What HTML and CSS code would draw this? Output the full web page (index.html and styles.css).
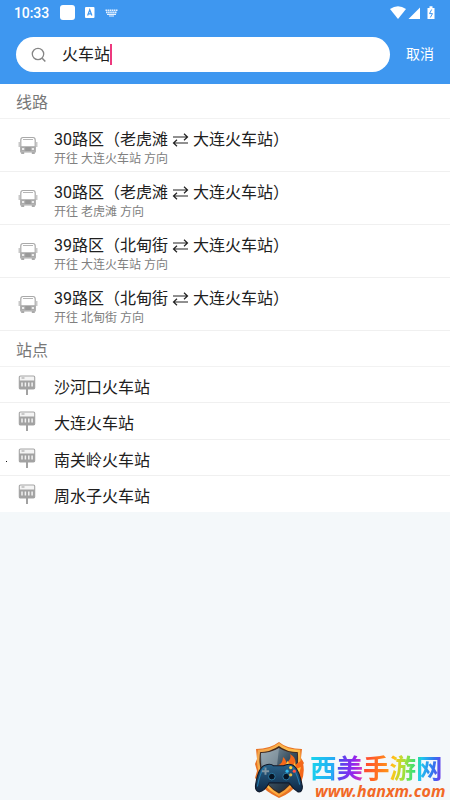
FILE: index.html
```html
<!DOCTYPE html>
<html lang="zh-CN">
<head>
<meta charset="utf-8">
<title>火车站</title>
<link rel="stylesheet" href="styles.css">
</head>
<body>
<svg class="defs" aria-hidden="true">
  <symbol id="bus" viewBox="0 0 20 20">
    <path d="M1.2 6v5M18.8 6v5" stroke="#bbb" stroke-width="1.2"/>
    <path d="M2.8 16V4Q2.8 1.5 5 1.5H15Q17.2 1.5 17.2 4V16Z" fill="#fff" stroke="#a9a9a9" stroke-width="1.2"/>
    <path d="M5 3.5h10" stroke="#b5b5b5"/>
    <path d="M2.5 10.2h15v5.5h-15z" fill="#aaa"/>
    <path d="M4 13h2.2M13.8 13H16" stroke="#fff" stroke-width="1.5"/>
    <path d="M7.3 12h5.4M7.3 14h5.4" stroke="#888"/>
    <path d="M3.2 16h3v2h-3zM13.8 16h3v2h-3z" fill="#aaa"/>
  </symbol>
  <symbol id="stop" viewBox="0 0 18 20">
    <rect x="1.3" y="1" width="15.4" height="13" rx="1.2" fill="#f4f4f4" stroke="#a5a5a5" stroke-width="1.1"/>
    <path d="M3.5 3h3" stroke="#aaa" stroke-width="1.2"/>
    <path d="M1.3 5.5h15.4V14H1.3z" fill="#a2a2a2"/>
    <path d="M4 7.4v4.2M7.4 7.4v4.2M10.8 7.4v4.2M14.1 7.4v4.2" stroke="#f2f2f2" stroke-width="1.5"/>
    <path d="M9 14v6" stroke="#a2a2a2" stroke-width="2"/>
  </symbol>
  <symbol id="swap" viewBox="0 0 17 16">
    <path d="M1 5H15.3M12 1.8 15.5 5 12 8.2M16 11H1.7M5 7.8 1.5 11 5 14.2" fill="none" stroke="#222" stroke-width="1.2"/>
  </symbol>
</svg>
<header class="top">
  <div class="status">
    <span class="clock">10:33</span>
    <i class="app"></i>
    <svg class="kbd-a" viewBox="0 0 10 11"><rect width="9.5" height="11" rx="1" fill="#fff"/><path d="M2.6 8.5 4.75 2.7 6.9 8.5M3.4 6.8h2.8" fill="none" stroke="#3e97f0" stroke-width="1.2"/></svg>
    <svg class="kbd" viewBox="0 0 13 8"><path d="M.5 1.2h12M1 3.4h11" stroke="#e6f2ff" stroke-width="1.6" stroke-dasharray="1.6 .5"/><path d="M2 5.3h9M4 7h5" stroke="#e6f2ff" stroke-width="1.2"/></svg>
    <svg class="signals" viewBox="0 0 47 14"><path d="M0 3Q8-2.5 16 3L8 13Z" fill="#fff"/><path d="M30 1.5V13H18.5Z" fill="#fff"/><path d="M37.5 2h2V.3h3V2h2v11h-7z" fill="#fff"/><path d="M41.7 3.5 39.5 7.6h3L40.3 11.5" fill="none" stroke="#3e97f0" stroke-width="1"/></svg>
  </div>
  <div class="search-row">
    <div class="search">
      <svg class="lens" viewBox="0 0 16 16"><circle cx="7" cy="7" r="5.7" fill="none" stroke="#858585" stroke-width="1.3"/><path d="M11.2 11.2 14.3 14.6" stroke="#858585" stroke-width="1.5"/></svg>
      <span class="query">火车站</span><i class="caret"></i>
    </div>
    <span class="cancel">取消</span>
  </div>
</header>
<main>
  <h2 class="heading">线路</h2>
  <ul class="list routes">
    <li><svg class="bus"><use href="#bus"/></svg><div><p class="name">30路区（老虎滩<svg class="swap"><use href="#swap"/></svg>大连火车站）</p><p class="dir">开往 大连火车站 方向</p></div></li>
    <li><svg class="bus"><use href="#bus"/></svg><div><p class="name">30路区（老虎滩<svg class="swap"><use href="#swap"/></svg>大连火车站）</p><p class="dir">开往 老虎滩 方向</p></div></li>
    <li><svg class="bus"><use href="#bus"/></svg><div><p class="name">39路区（北甸街<svg class="swap"><use href="#swap"/></svg>大连火车站）</p><p class="dir">开往 大连火车站 方向</p></div></li>
    <li><svg class="bus"><use href="#bus"/></svg><div><p class="name">39路区（北甸街<svg class="swap"><use href="#swap"/></svg>大连火车站）</p><p class="dir">开往 北甸街 方向</p></div></li>
  </ul>
  <h2 class="heading second">站点</h2>
  <ul class="list stops">
    <li><svg class="stop"><use href="#stop"/></svg><p class="name">沙河口火车站</p></li>
    <li><svg class="stop"><use href="#stop"/></svg><p class="name">大连火车站</p></li>
    <li><svg class="stop"><use href="#stop"/></svg><p class="name">南关岭火车站</p></li>
    <li><svg class="stop"><use href="#stop"/></svg><p class="name">周水子火车站</p></li>
  </ul>
</main>
<i class="speck"></i>
<div class="mark">
  <svg class="shield" viewBox="0 0 60 60">
    <defs>
      <linearGradient id="fire" x1="0" y1="0" x2="1" y2="1"><stop offset="0" stop-color="#f0a04c"/><stop offset=".5" stop-color="#ffc04c"/><stop offset="1" stop-color="#f58a2c"/></linearGradient>
      <linearGradient id="steel" x1="0" y1="0" x2="1" y2="1"><stop offset="0" stop-color="#94a8b5"/><stop offset=".5" stop-color="#3a5060"/><stop offset="1" stop-color="#101c2c"/></linearGradient>
      <linearGradient id="pad" x1="0" y1="0" x2="0" y2="1"><stop offset="0" stop-color="#2a638a"/><stop offset="1" stop-color="#0e2744"/></linearGradient>
    </defs>
    <path d="M32 1Q40 8 55 8L54 17 57 22 54 27 56 35 51 42Q45 52 32 57Q17 50 12 41L8 37 10 30 8 23 10 18 9 8Q23 8 32 1Z" fill="#e87325"/>
    <path d="M32 3.5Q40 10 52 10Q53 21 51 31Q47 46 32 54Q17 46 13 31Q10 21 12 10Q23 10 32 3.5Z" fill="#40291f" stroke="url(#fire)" stroke-width="2.5"/>
    <path d="M32 7Q40 12 50 12Q51 24 48 33Q44 45 32 51Q20 45 16 33Q13 24 14 12Q24 12 32 7Z" fill="url(#steel)"/>
    <path d="M32 7 30 25 16 28 14 12Q24 12 32 7Z" fill="#a2b1b8" opacity=".55"/>
    <path d="M28 25Q36 24 36 16Q40 19 39 22Q45 18 43 13Q50 17 48 24L55 19Q59 30 54 42L46 32Z" fill="#f4681a"/>
    <path d="M33 26Q40 25 40 20Q44 23 43 26Q48 24 48 20L49 28 54 26 51 36Z" fill="#ffc23d"/>
    <g transform="translate(3.2 3.2) scale(.9)">
      <path d="M17 23Q23 21 26 24H37Q42 21 47 23Q54 26 58 47Q58 54 53 53Q48 50 43 43H21Q16 52 10 53Q5 52 6 45Q9 25 17 23Z" fill="url(#pad)" stroke="#101a2b" stroke-width="1.2"/>
      <path d="M16 25Q11 31 8 47M47 26Q52 32 55 45" fill="none" stroke="#237cad" stroke-width="1.2"/>
      <path d="M17 26v8M13 30h8" stroke="#7f95a2" stroke-width="2.2"/>
      <circle cx="24" cy="36" r="3.7" fill="#071525" stroke="#2c7ea8"/><circle cx="40" cy="36" r="3.7" fill="#071525" stroke="#2c7ea8"/>
      <circle cx="45" cy="26" r="1.8" fill="#ffd13f"/><circle cx="49" cy="30" r="1.8" fill="#ff5140"/><circle cx="41" cy="30" r="1.8" fill="#31b8ec"/><circle cx="45" cy="34" r="1.8" fill="#e8bd45"/>
    </g>
  </svg>
  <div class="brand"><div class="brand-name">西美手游网</div><div class="url">www.hanxm.com</div></div>
</div>
</body>
</html>
```
FILE: styles.css
```css
* { box-sizing: border-box; margin: 0; padding: 0; }
body { width: 450px; height: 800px; overflow: hidden; position: relative; background: #f4f8fa; font-family: Roboto, "Noto Sans CJK SC", sans-serif; color: #202020; }
.defs { position: absolute; width: 0; height: 0; }
.top { height: 84px; background: #3e97f0; color: #fff; }
.status { height: 37px; padding: 0 14px 12px; display: flex; align-items: center; }
.clock { width: 46px; font-size: 14px; font-weight: 500; letter-spacing: -.1px; }
.app { width: 15px; height: 15px; border-radius: 3px; background: #fff; }
.kbd-a { width: 10px; height: 11px; margin-left: 10px; }
.kbd { width: 13px; height: 8px; margin-left: 10px; }
.signals { width: 47px; height: 14px; margin-left: auto; margin-right: -1px; }
.search-row { display: flex; align-items: center; padding-left: 16px; }
.search { width: 374px; height: 35px; border-radius: 18px; background: #fff; display: flex; align-items: center; padding-left: 15px; }
.lens { width: 16px; height: 16px; }
.query { color: #202020; font-size: 16px; line-height: 24px; margin-left: 15px; }
.caret { width: 2px; height: 21px; background: #ed397e; }
.cancel { margin-left: 16px; padding-bottom: 3px; font-size: 14px; }
main { background: #fff; }
.heading { height: 35px; padding-left: 16px; border-bottom: 1px solid #f2f2f2; font-size: 16px; font-weight: 400; line-height: 37px; color: #777; }
.second { height: 36px; line-height: 39px; }
.list { list-style: none; }
.list li { display: flex; border-bottom: 1px solid #f0f0f0; }
.routes li { height: 53px; padding: 9px 0 0 18px; }
.bus { width: 20px; height: 20px; margin: 8px 16px 0 0; }
.name { display: flex; align-items: center; font-size: 16px; line-height: 24px; white-space: nowrap; }
.swap { width: 17px; height: 16px; margin: 0 4px; }
.dir { font-size: 12px; line-height: 15px; color: #808080; }
.stops li { height: 36.25px; padding: 8px 0 0 18px; }
.stops li:last-child { border: 0; }
.stops .name { height: 26px; }
.stop { width: 18px; height: 20px; margin-right: 18px; }
.speck { position: absolute; left: 6px; top: 461px; width: 1px; height: 1px; background: #111; }
.mark { position: absolute; left: 247px; top: 741px; display: flex; }
.shield { width: 60px; height: 60px; }
.brand { margin-left: 3px; padding-top: 7px; }
.brand-name { width: 133px; font-family: "Noto Sans CJK SC", sans-serif; font-weight: 700; font-size: 26.5px; line-height: 38px; white-space: nowrap; color: transparent; background-clip: text; background-image: linear-gradient(97deg, #15d9eb, #26a9f5 19%, #4752ec 21%, #8f25ef 33%, #d536bb 40%, #ff472f 41%, #ff9418 59%, #ffc719 62%, #a5e038 70%, #24df83 79%, #20c8ef 82%, #3177ef 91%, #8429e8); }
.url { margin-left: 5px; margin-top: -3px; font: italic 700 16px/16px "Noto Sans", sans-serif; color: #f26927; letter-spacing: .05px; }
```
